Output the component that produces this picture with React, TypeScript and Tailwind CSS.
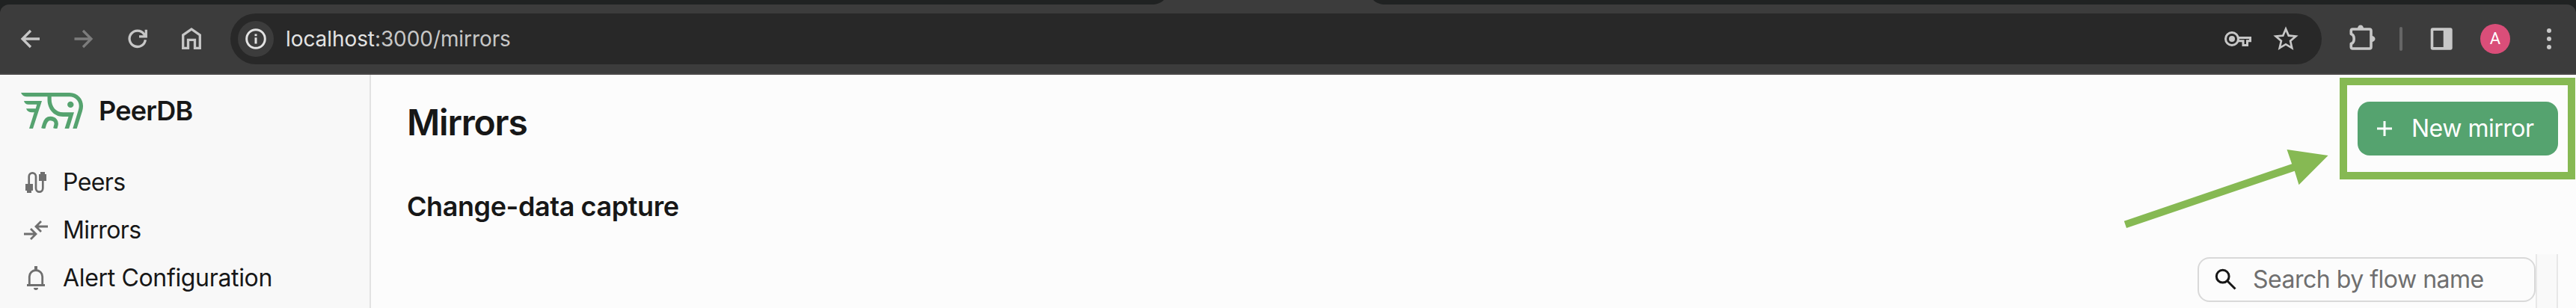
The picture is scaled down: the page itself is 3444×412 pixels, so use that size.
import type { ReactNode } from "react";

const stroke = { fill: "none", stroke: "currentColor" } as const;

function ToolbarIcon({ className = "", children }: { className?: string; children: ReactNode }) {
  return (
    <svg viewBox="0 0 32 32" strokeWidth={3.3} {...stroke} className={`size-8 shrink-0 ${className}`}>
      {children}
    </svg>
  );
}

function TabStrip() {
  return (
    <div className="flex h-1.5 justify-between bg-[#3c3c3c]">
      <svg viewBox="0 0 1556 6" className="h-1.5 w-[1556px]" fill="#202222">
        <path d="M0 0H1556C1552 4 1546 6 1540 6H0Z" />
      </svg>
      <svg viewBox="0 0 1608 6" className="h-1.5 w-[1608px]" fill="#202222">
        <path d="M0 0H1608V6H16C10 6 4 4 0 0Z" />
      </svg>
    </div>
  );
}

function Toolbar() {
  return (
    <div className="h-[94px] bg-[#202222]">
      <div className="flex h-full items-center rounded-t-xl bg-[#3c3c3c] pb-0.5 pl-6 text-[#c7c7c7] shadow-[inset_0_-2px_0_#484646]">
        <div className="flex gap-10">
          <ToolbarIcon>
            <path d="M29 16H6M17 5L6 16L17 27" />
          </ToolbarIcon>
          <ToolbarIcon className="text-[#7c7c7c]">
            <path d="M3.5 16H26M15 5L26 16L15 27" />
          </ToolbarIcon>
          <ToolbarIcon>
            <path d="M26.4 17.2A10.7 10.7 0 1 1 24.4 9.4L26.5 12.4M27.3 3.8V12.9H18" />
          </ToolbarIcon>
          <ToolbarIcon>
            <path d="M4.7 28.3V10.9L16 3L27.3 10.9V28.3H20.5V17.3H11.5V28.3Z" />
          </ToolbarIcon>
        </div>

        <div className="ml-9 flex h-[68px] w-[2796px] items-center rounded-full bg-[#282828] pr-7 pl-2.5">
          <div className="flex size-12 items-center justify-center rounded-full bg-[#3c3c3c] text-[#e3e3e3]">
            <svg viewBox="0 0 28 28" className="size-7" {...stroke} strokeWidth={3}>
              <circle cx="14" cy="14" r="12.3" />
              <path d="M14 12.2V20.6M14 7.4V10.2" />
            </svg>
          </div>
          <div className="ml-4 text-[28px] leading-9 tracking-[-0.08px] whitespace-nowrap text-[#c7c7c7]">
            <span className="text-[#e3e3e3]">localhost</span>:3000/mirrors
          </div>
          <div className="ml-auto flex items-center gap-6">
            <svg viewBox="0 0 40 32" className="h-8 w-10" {...stroke} strokeWidth={3}>
              <circle cx="12" cy="16" r="8.5" />
              <circle cx="12" cy="16" r="4" fill="currentColor" stroke="none" />
              <path d="M20.5 14.5H36.5V18.700H32.5V24.5H27V18.700H20.5" />
            </svg>
            <svg viewBox="0 0 24 24" className="size-10" fill="currentColor">
              <path d="m22 9.24-7.19-.62L12 2 9.19 8.63 2 9.24l5.46 4.73L5.82 21 12 17.27 18.18 21l-1.63-7.03L22 9.24zM12 15.4l-3.76 2.27 1-4.28-3.32-2.88 4.38-.38L12 6.1l1.71 4.04 4.38.38-3.32 2.88 1 4.28L12 15.4z" />
            </svg>
          </div>
        </div>

        <svg viewBox="0 0 40 40" className="ml-9 size-10" {...stroke} strokeWidth={3.6} strokeLinejoin="round">
          <path d="M3.300 13.500V9Q3.300 7 5.300 7H28Q30 7 30 9V31Q30 33 28 33H5.300Q3.300 33 3.300 31V26.500C8.500 25 8.500 15 3.300 13.500Z" />
          <path d="M12 6A4 4.500 0 0 1 20 6ZM31 16A4.500 4 0 0 1 31 24Z" fill="currentColor" stroke="none" />
        </svg>
        <div className="ml-7 h-8 w-1 rounded-full bg-[#666666]" />
        <svg viewBox="0 0 32 32" className="ml-9 size-8" fill="currentColor">
          <path
            fillRule="evenodd"
            d="M4.400 1.300H28Q30.700 1.300 30.700 4V28Q30.700 30.700 28 30.700H4.400Q1.700 30.700 1.700 28V4Q1.700 1.300 4.400 1.300ZM5.300 5V27H18.700V5Z"
          />
        </svg>
        <div className="ml-9 flex size-10 items-center justify-center rounded-full bg-[#da4e79] font-['Roboto',sans-serif] text-[22px] leading-none text-white">
          A
        </div>
        <svg viewBox="0 0 32 32" className="ml-9 size-8" fill="currentColor">
          <circle cx="16" cy="5" r="3" />
          <circle cx="16" cy="16" r="3" />
          <circle cx="16" cy="27" r="3" />
        </svg>
      </div>
    </div>
  );
}

function Logo() {
  return (
    <svg viewBox="0 0 84 48" className="h-12 w-[84px]" fill="#55a36f">
      <path d="M0 0H65C76 0 83 8.500 83 17.500C83 20.500 82.600 22.500 81.800 25.200L74.700 48H69.300L76.600 24C77.300 21.600 77.700 20 77.700 17.500C77.700 11 72.500 5.300 65 5.300H8C4 5.300 1.500 3.500 0 0Z" />
      <path d="M35.500 4H40.700V8.500C40.700 18.500 46.500 26.300 56.500 26.300H71L64.200 48H58.500L63.600 32H56C43.500 32 35.500 21 35.500 9.500Z" />
      <path d="M4 11H28L16 48H11L17.800 26.300H14.500C11 26.300 8 24.500 7 21.300H19.700L21.300 15.700H10C7 15.700 4.700 14 4 11Z" />
      <path d="M29.700 48L31.500 42C33 37 35.800 34.500 39.300 34.500C45 34.500 48.200 38.500 46.900 43.500L45.700 48" fill="none" stroke="#55a36f" strokeWidth="5.3" />
      <circle cx="66.300" cy="15.900" r="4.200" />
    </svg>
  );
}

function NavItem({ icon, label, tracking }: { icon: ReactNode; label: string; tracking: string }) {
  return (
    <a className="flex h-16 items-center gap-5 pl-8">
      <svg viewBox="0 0 32 32" className="size-8 text-[#6f6f6f]" {...stroke}>
        {icon}
      </svg>
      <span className={`text-[32px] leading-10 whitespace-nowrap ${tracking}`}>{label}</span>
    </a>
  );
}

function Sidebar() {
  return (
    <aside className="w-[496px] shrink-0 border-r-2 border-[#e2e2e2] bg-[#f8f8f8] pt-6">
      <div className="flex items-center gap-5 pl-7">
        <Logo />
        <span className="text-[36px] leading-12 font-semibold tracking-[-0.8px]">PeerDB</span>
      </div>
      <nav className="mt-10">
        <NavItem
          label="Peers"
          tracking="tracking-[-0.6px]"
          icon={
            <>
              <path strokeWidth="2.7" d="M6.700 19V8.200A4.650 4.850 0 0 1 16 8.200V23.800A4.650 4.850 0 0 0 25.300 23.800V13" />
              <path fill="currentColor" stroke="none" d="M2 18H12V27H10V30H4V27H2ZM20 5H22V2H28V5H30V14H20Z" />
            </>
          }
        />
        <NavItem
          label="Mirrors"
          tracking="tracking-[-0.62px]"
          icon={<path strokeWidth="2.800" d="M0 21H15.500M9 14L16 21L9 28M32 11H16.500M23 4L16 11L23 18" />}
        />
        <NavItem
          label="Alert Configuration"
          tracking="tracking-[-0.34px]"
          icon={
            <>
              <path strokeWidth="2.800" d="M4 25.500H28M7.300 25V14A8.700 8.500 0 0 1 24.700 14V25" />
              <path fill="currentColor" stroke="none" d="M14 0H18V5H14ZM13 29H19A3 3 0 0 1 13 29Z" />
            </>
          }
        />
      </nav>
    </aside>
  );
}

function Content() {
  return (
    <main className="flex min-w-0 flex-1 flex-col bg-[#fcfcfc] pl-12">
      <div className="flex h-32 justify-between pr-6">
        <h1 className="pt-9 text-[48px] leading-14 font-semibold tracking-[-1.2px]">Mirrors</h1>
        <button className="mt-9 flex h-[72px] w-[268px] items-center rounded-2xl bg-[#55a36f] pl-5 text-white">
          <svg viewBox="0 0 32 32" className="size-8" {...stroke} strokeWidth={3}>
            <path d="M6 16H26M16 6V26" />
          </svg>
          <span className="ml-5 text-[32px] leading-10 tracking-[-0.49px] whitespace-nowrap">New mirror</span>
        </button>
      </div>
      <h2 className="mt-6 text-[36px] leading-12 font-semibold tracking-[-0.42px]">Change-data capture</h2>
      <div className="mt-auto flex h-[72px] justify-end pr-6">
        <label className="mt-1 flex h-[60px] w-[452px] items-center rounded-2xl border-2 border-[#d9d9d9] pl-5">
          <svg viewBox="0 0 32 32" className="size-8" {...stroke} strokeWidth={3}>
            <circle cx="11.700" cy="11.700" r="8.400" />
            <path d="M17.800 17.800L28.500 28.500" />
          </svg>
          <span className="ml-5 text-[32px] leading-10 tracking-[-0.49px] whitespace-nowrap text-[#6f6f6f]">
            Search by flow name
          </span>
        </label>
        <div className="w-[30px] border-x-2 border-[#e8e8e8] bg-[#f9f9f9]" />
      </div>
    </main>
  );
}

function Callout() {
  return (
    <>
      <div className="pointer-events-none absolute top-[104px] right-px h-[136px] w-[315px] border-10 border-[#86b953]" />
      <svg viewBox="0 0 280 110" className="pointer-events-none absolute top-[198px] left-[2836px] h-[110px] w-[280px]" fill="#86b953">
        <path d="M3.800 97.700L228.100 21.300L221.500 2L276.600 10L237.500 49.300L231.800 30.700L7 107Z" />
      </svg>
    </>
  );
}

export default function App() {
  return (
    <div className="relative flex h-[412px] w-[3444px] flex-col overflow-hidden font-['Inter',sans-serif] text-[#171717]">
      <TabStrip />
      <Toolbar />
      <div className="flex min-h-0 flex-1">
        <Sidebar />
        <Content />
      </div>
      <Callout />
    </div>
  );
}
